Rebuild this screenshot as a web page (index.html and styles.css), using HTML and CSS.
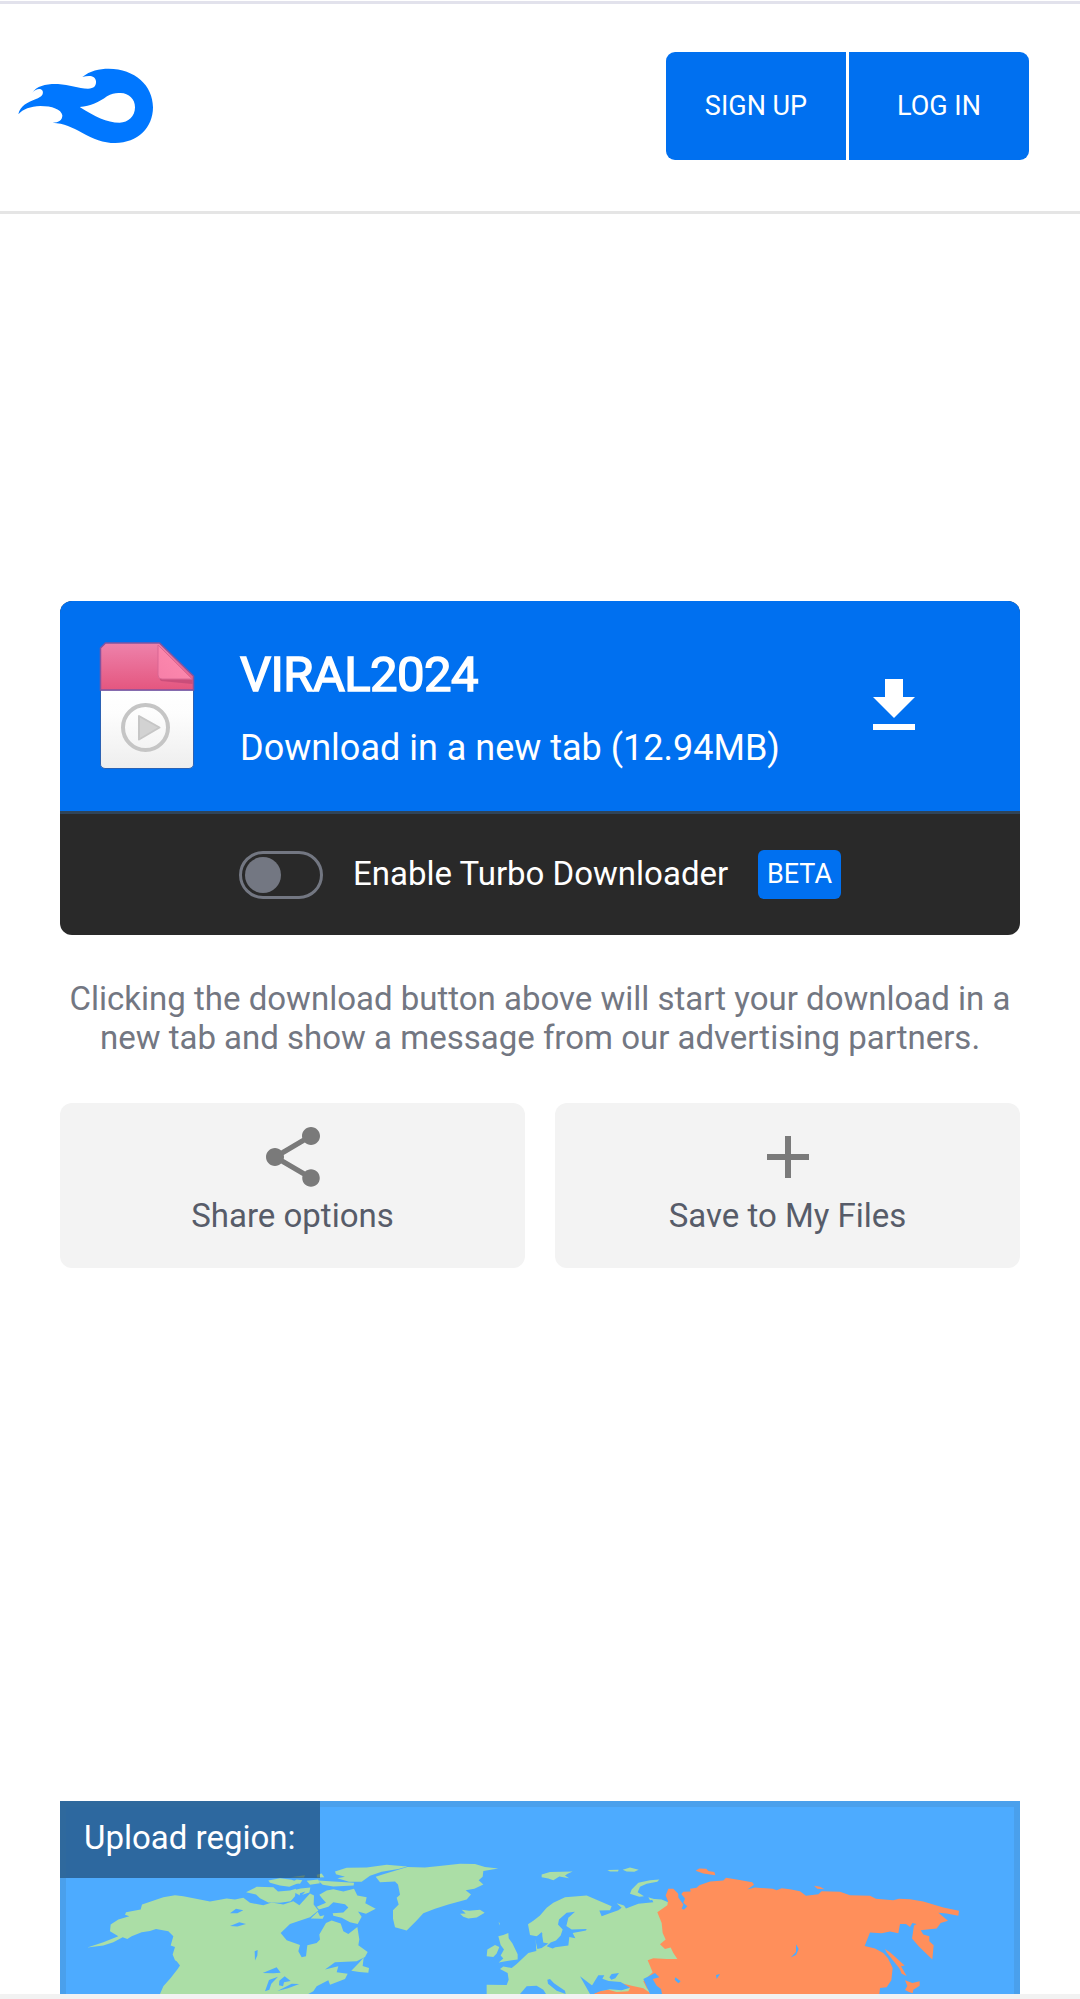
FILE: index.html
```html
<!DOCTYPE html>
<html lang="en">
<head>
<meta charset="utf-8">
<title>VIRAL2024</title>
<link rel="stylesheet" href="styles.css">
</head>
<body>
<header class="header">
  <a class="logo" href="#" aria-label="Home">
    <svg width="136" height="76" viewBox="54 204 408 228" fill="#07f">
      <path fill-rule="evenodd" d="M247 231C270 212 298 206 326 206C405 207 459 256 459 322C459 383 413 429 346 429C309 429 280 417 246 398C217 382 192 370 158 368C177 368 187 361 187 346C184 328 156 318 121 318C91 319 69 327 55 343C60 317 84 306 108 297C125 291 131 283 128 273C122 263 107 267 97 278C111 257 139 251 174 252C208 254 235 265 264 266C282 266 289 258 288 244C286 226 268 225 247 231ZM239 321C273 319 296 307 321 289C336 279 350 278 362 279C387 280 405 297 405 322C405 349 385 368 359 368C319 368 286 350 239 321Z"/>
    </svg>
  </a>
  <nav class="account">
    <a class="account-link account-link-first" href="#">SIGN UP</a>
    <a class="account-link account-link-last" href="#">LOG IN</a>
  </nav>
</header>
<main class="content">
  <section class="card">
    <a class="download" href="#">
      <svg class="file-icon" width="96" height="129" viewBox="0 0 96 129">
        <defs>
          <linearGradient id="pink" x2="0" y2="1"><stop stop-color="#ee82ab"/><stop offset="1" stop-color="#e4567f"/></linearGradient>
          <linearGradient id="paper" x2="0" y2="1"><stop stop-color="#fff"/><stop offset=".3" stop-color="#fdfdfd"/><stop offset="1" stop-color="#eee"/></linearGradient>
          <linearGradient id="fold" x1="1" x2="0" y2="1"><stop stop-color="#ff8db0"/><stop offset="1" stop-color="#f77fa8"/></linearGradient>
        </defs>
        <path d="M1.500 49H94.500V123Q94.500 127 90 127.500H6Q1.500 127 1.500 123Z" fill="url(#paper)" stroke="#2b62b4"/>
        <path d="M1.500 49V7L6.500 2H60.500L94.500 35V49Z" fill="url(#pink)" stroke="#8054a0" stroke-width="1.500"/>
        <path d="M60 37L93.500 38.500V43L62 40Z" fill="#b84372" opacity=".6"/>
        <path d="M59 4V34Q59 38 63 38H93Z" fill="url(#fold)" stroke="#d96793"/>
        <circle cx="46.500" cy="86.500" r="22.500" fill="none" stroke="#c5c5c5" stroke-width="4"/>
        <path d="M40 75L60.500 86.500L40 98.500Z" fill="#d2d2d2" stroke="#c6c6c6" stroke-width="2" stroke-linejoin="round"/>
      </svg>
      <span class="file-text">
        <span class="file-name">VIRAL2024</span>
        <span class="file-size">Download in a new tab (12.94MB)</span>
      </span>
      <svg class="download-icon" width="72" height="72" viewBox="0 0 24 24" fill="#fff"><path d="M19 9h-4V3H9v6H5l7 7 7-7zM5 18v2h14v-2H5z"/></svg>
    </a>
    <div class="turbo">
      <span class="toggle"><span class="knob"></span></span>
      <span class="turbo-label">Enable Turbo Downloader</span>
      <span class="beta">BETA</span>
    </div>
  </section>
  <p class="note">Clicking the download button above will start your download in a<br>new tab and show a message from our advertising partners.</p>
  <div class="actions">
    <a class="action" href="#">
      <svg width="72" height="72" viewBox="0 0 24 24" fill="#7a7a7a"><path d="M18 16.080c-.76 0-1.440.3-1.960.77L8.910 12.700c.05-.23.09-.46.09-.7s-.04-.47-.09-.7l7.050-4.110c.54.5 1.250.81 2.040.81 1.660 0 3-1.340 3-3s-1.340-3-3-3-3 1.340-3 3c0 .24.04.47.09.7L8.040 9.810C7.500 9.310 6.790 9 6 9c-1.660 0-3 1.340-3 3s1.340 3 3 3c.79 0 1.500-.31 2.040-.81l7.120 4.160c-.05.21-.08.43-.08.65 0 1.610 1.310 2.920 2.920 2.920s2.920-1.310 2.920-2.920-1.310-2.920-2.920-2.920z"/></svg>
      <span>Share options</span>
    </a>
    <a class="action" href="#">
      <svg width="72" height="72" viewBox="0 0 24 24" fill="#7a7a7a"><path d="M19 13h-6v6h-2v-6H5v-2h6V5h2v6h6v2z"/></svg>
      <span>Save to My Files</span>
    </a>
  </div>
  <section class="region">
    <svg class="map" viewBox="30 35 2880 578" preserveAspectRatio="none">
      <g fill="#abdea6">
        <!-- North America -->
        <path d="M330 613L340 590L362 565L383 538L390 528L380 515L375 512L368 495L375 472L362 468L370 440L355 425L318 418L300 424L275 428L245 440L232 448L218 443L190 458L160 468L112 474L160 458L205 440L180 425L182 405L205 390L238 380L225 376L228 368L272 360L276 345L340 323L375 317L400 320L480 336L530 327L555 330L580 325L600 340L640 347L665 339L700 345L730 335L748 347L780 312L792 318L791 345L805 363L780 383L720 403L692 430L710 452L750 466L745 485L755 503L768 500L772 467L800 460L810 450L808 435L828 400L845 393L872 402L880 425L895 433L922 412L928 450L925 467L953 487L945 502L920 515L855 518L825 540L865 530L860 548L893 552L885 568L840 585L835 572L800 590L790 605L775 613Z"/>
        <!-- Arctic islands -->
        <path d="M588 308L620 292L670 293L684 306L720 303L738 298L735 320L722 335L690 340L655 339L630 326L618 315Z"/>
        <path d="M655 273L690 266L725 271L748 280L718 292L690 288L660 280Z"/>
        <path d="M722 280L740 270L757 272L750 283Z M770 274L804 270L810 281L780 286Z M800 256L815 252L823 263L802 264Z M722 263L765 257L762 264Z M724 304L752 297L781 294L778 309L750 318Z"/>
        <path d="M804 273L850 276L912 280L911 288L850 291L818 286Z"/>
        <path d="M855 246L890 235L950 234L1010 226L1072 231L1045 239L995 247L960 259L935 277L897 277L862 266L885 262L858 254Z"/>
        <path d="M800 352L828 340L816 326L808 316L830 303L850 299L880 306L912 298L922 318L950 323L946 341L977 358L948 373L924 366L935 382L923 403L900 398L875 385L850 379L848 371L880 369L895 354L885 344L850 338L835 352L807 360Z"/>
        <path d="M782 387L803 367L810 380L823 377L818 388Z M904 543L928 519L941 504L938 529L957 535L955 549L928 547Z"/>
        <!-- Greenland -->
        <path d="M977 262L1000 254L1072 233L1125 234L1168 230L1230 223L1275 224L1305 233L1345 237L1300 245L1298 262L1286 272L1300 285L1273 298L1247 302L1263 315L1250 330L1195 345L1155 358L1120 371L1100 393L1070 423L1035 413L1029 388L1029 362L1046 345L1040 325L1050 316L1044 285L1035 276L990 278Z"/>
        <!-- Iceland and the British Isles -->
        <path d="M1230 373L1247 372L1235 361L1257 364L1290 361L1304 370L1280 384L1255 387L1240 382Z M1346 398L1349 400L1348 408Z"/>
        <path d="M1310 500L1312 480L1335 466L1348 472L1340 492L1330 502Z M1345 440L1360 436L1375 430L1376 446L1387 461L1403 494L1403 510L1380 513L1346 519L1360 507L1352 498L1362 480L1352 466Z"/>
        <!-- Europe -->
        <path d="M1310 613L1310 585L1370 586L1376 570L1373 550L1350 538L1360 531L1385 535L1400 523L1435 490L1459 484L1457 450L1470 442L1475 450L1477 430L1460 440L1440 436L1434 404L1450 394L1470 378L1490 355L1510 340L1545 323L1610 318L1650 335L1685 350L1680 362L1648 363L1655 380L1675 373L1705 362L1715 355L1700 341L1722 348L1728 357L1765 343L1810 338L1805 328L1835 330L1858 340L1870 370L1885 440L1895 500L1810 613L1660 613L1590 560L1620 613Z"/>
        <path d="M1475 255L1500 248L1568 246L1553 253L1545 258L1557 266L1528 261L1510 272L1495 267L1475 263Z M1672 242L1706 241L1704 246L1680 246Z M1718 241L1740 234L1766 241L1753 247L1730 246Z"/>
        <path d="M1740 313L1745 300L1765 280L1800 272L1828 270L1822 277L1790 283L1770 292L1763 308L1782 320L1768 322Z M1795 323L1815 330L1800 332Z"/>
      </g>
      <!-- Russia and Asia -->
      <g fill="#ff8f5b">
        <path d="M1630 613L1650 604L1675 600L1700 607L1735 605L1740 595L1715 581L1745 588L1780 596L1805 613L2488 613L2490 595L2510 593L2524 572L2528 535L2514 506L2500 490L2475 477L2444 469L2460 429L2495 431L2520 426L2545 431L2550 403L2568 403L2580 412L2587 400L2600 403L2592 408L2586 447L2606 470L2647 510L2651 467L2638 455L2638 440L2620 435L2612 422L2660 417L2672 400L2694 394L2665 370L2690 372L2725 379L2727 364L2680 354L2620 336L2580 329L2547 328L2530 332L2478 328L2460 319L2400 317L2370 307L2315 305L2305 314L2268 319L2250 305L2220 299L2195 296L2180 302L2168 298L2115 294L2092 300L2112 286L2107 278L2060 270L2028 265L2020 273L1980 276L1948 287L1940 295L1920 298L1922 306L1900 307L1890 318L1870 298L1855 298L1847 318L1854 335L1852 347L1822 368L1835 400L1838 430L1847 450L1830 464L1845 478L1862 474L1870 490L1882 508L1850 508L1810 506L1793 512L1808 548L1780 575L1790 595L1808 613Z"/>
        <path d="M1937 244L1948 237L1969 238L1975 245L1993 248L1996 257L1960 252Z M2292 289L2310 292L2324 299L2302 298Z M2505 478L2520 488L2564 528L2553 530L2570 559L2555 552L2548 536L2510 489Z M2565 572L2587 580L2609 575L2609 588L2590 600L2588 611L2577 607L2565 601L2572 589Z"/>
      </g>
      <g fill="#4dabff">
        <path d="M540 371L558 358L580 362L562 371Z M540 409L568 398L588 403L562 411Z M614 485L623 481L622 498L615 513Z M638 550L680 533L692 549L670 551Z M645 605L657 571L684 561L664 582L658 600Z M688 573L704 560L722 574L702 578L699 590L687 587Z M682 604L725 582L748 583L714 596Z M750 311L766 306L747 327Z"/>
        <!-- Baltic, Black, Caspian and Mediterranean seas -->
        <path d="M1550 370L1575 367L1555 385L1549 409L1565 420L1610 418L1608 423L1568 430L1576 446L1558 442L1555 468L1516 473L1508 477L1490 470L1502 459L1518 453L1532 438L1538 420L1524 405L1527 390Z M1455 446L1475 427L1480 459L1495 462L1475 475L1462 478Z"/>
        <path d="M1628 613L1620 597L1645 557L1663 557L1657 567L1676 574L1712 577L1740 594L1715 602L1680 599L1650 605Z M1678 563L1685 553L1707 550L1696 566L1684 570Z M1780 568L1815 550L1828 563L1808 568L1820 588L1833 598L1836 613L1800 613Z M1410 613L1430 590L1460 588L1480 600L1488 613Z M1492 570L1500 568L1512 581L1545 603L1547 613L1520 603L1494 582Z"/>
        <path d="M1885 303L1905 327L1900 340L1912 350L1902 361L1895 357L1900 345L1885 324Z M1876 563L1892 575L1885 581L1874 570Z M1998 556L2010 553L2000 568Z M2238 464L2246 478L2238 496L2222 504L2238 487Z"/>
      </g>
    </svg>
    <span class="region-label">Upload region:</span>
  </section>
</main>
</body>
</html>
```
FILE: styles.css
```css
* { box-sizing: border-box; }

body {
  margin: 0;
  height: 1999px;
  overflow: hidden;
  display: flex;
  flex-direction: column;
  background: #fff;
  font-family: Roboto, "Liberation Sans", sans-serif;
  padding-top: 1px;
}

a { color: inherit; text-decoration: none; }

svg { display: block; flex: none; }

.header {
  height: 213px;
  flex: none;
  display: flex;
  justify-content: space-between;
  align-items: flex-start;
  padding: 48px 51px 0 18px;
  border-top: 3px solid #e2e2ec;
  border-bottom: 3px solid #e5e5e5;
}

.logo { padding-top: 16px; }

.account { display: flex; gap: 3px; }

.account-link {
  width: 180px;
  height: 108px;
  display: flex;
  align-items: center;
  justify-content: center;
  background: #0070f0;
  color: #fff;
  font-size: 27px;
}

.account-link-first { border-radius: 9px 0 0 9px; }
.account-link-last { border-radius: 0 9px 9px 0; }

.content {
  flex: 1;
  min-height: 0;
  padding: 387px 60px 0;
  border-bottom: 5px solid #f2f2f2;
  display: flex;
  flex-direction: column;
}

.card {
  flex: none;
  height: 334px;
  border-radius: 12px;
  overflow: hidden;
  background: #292929;
}

.download {
  height: 210px;
  display: flex;
  align-items: flex-start;
  background: #0070f0;
  color: #fff;
}

.file-icon { margin: 40px 0 0 39px; }

.file-text {
  width: 578px;
  margin: 43px 0 0 45px;
  display: flex;
  flex-direction: column;
  white-space: nowrap;
}

.file-name {
  font-size: 49px;
  line-height: 62px;
  letter-spacing: -.6px;
  -webkit-text-stroke: 1.500px #fff;
}

.file-size {
  margin-top: 21px;
  font-size: 36px;
  line-height: 42px;
}

.download-icon { margin: 69px 0 0 40px; }

.turbo {
  height: 124px;
  border-top: 3px solid #2f4459;
  display: flex;
  align-items: flex-start;
  padding: 37px 0 0 179px;
  color: #fff;
}

.toggle {
  width: 84px;
  height: 48px;
  border: 3px solid #737782;
  border-radius: 24px;
  padding: 3px;
}

.knob {
  display: block;
  width: 36px;
  height: 36px;
  border-radius: 50%;
  background: #737782;
}

.turbo-label {
  width: 375px;
  margin-left: 30px;
  font-size: 33px;
  line-height: 46px;
  white-space: nowrap;
}

.beta {
  width: 83px;
  height: 49px;
  margin: -1px 0 0 30px;
  border-radius: 6px;
  background: #0070f0;
  font-size: 27px;
  line-height: 48px;
  text-align: center;
}

.note {
  margin: 44px -20px 0;
  text-align: center;
  color: #737782;
  font-size: 33px;
  line-height: 39px;
}

.actions {
  margin-top: 46px;
  display: grid;
  grid-template-columns: 1fr 1fr;
  gap: 30px;
}

.action {
  height: 165px;
  padding-top: 18px;
  border-radius: 12px;
  background: #f3f3f3;
  color: #575c69;
  display: flex;
  flex-direction: column;
  align-items: center;
  font-size: 33px;
  line-height: 46px;
}

.region {
  position: relative;
  flex: 1;
  margin-top: 533px;
  background: #4dabff;
}

.map {
  width: 960px;
  height: 193px;
}

.region::after {
  content: "";
  position: absolute;
  inset: 0;
  border: 6px solid rgba(60, 110, 150, .18);
  border-bottom: 0;
}

.region-label {
  position: absolute;
  top: 0;
  left: 0;
  width: 260px;
  height: 77px;
  padding-left: 24px;
  background: rgba(20, 50, 80, .55);
  color: #fff;
  font-size: 33px;
  line-height: 73px;
}
```
